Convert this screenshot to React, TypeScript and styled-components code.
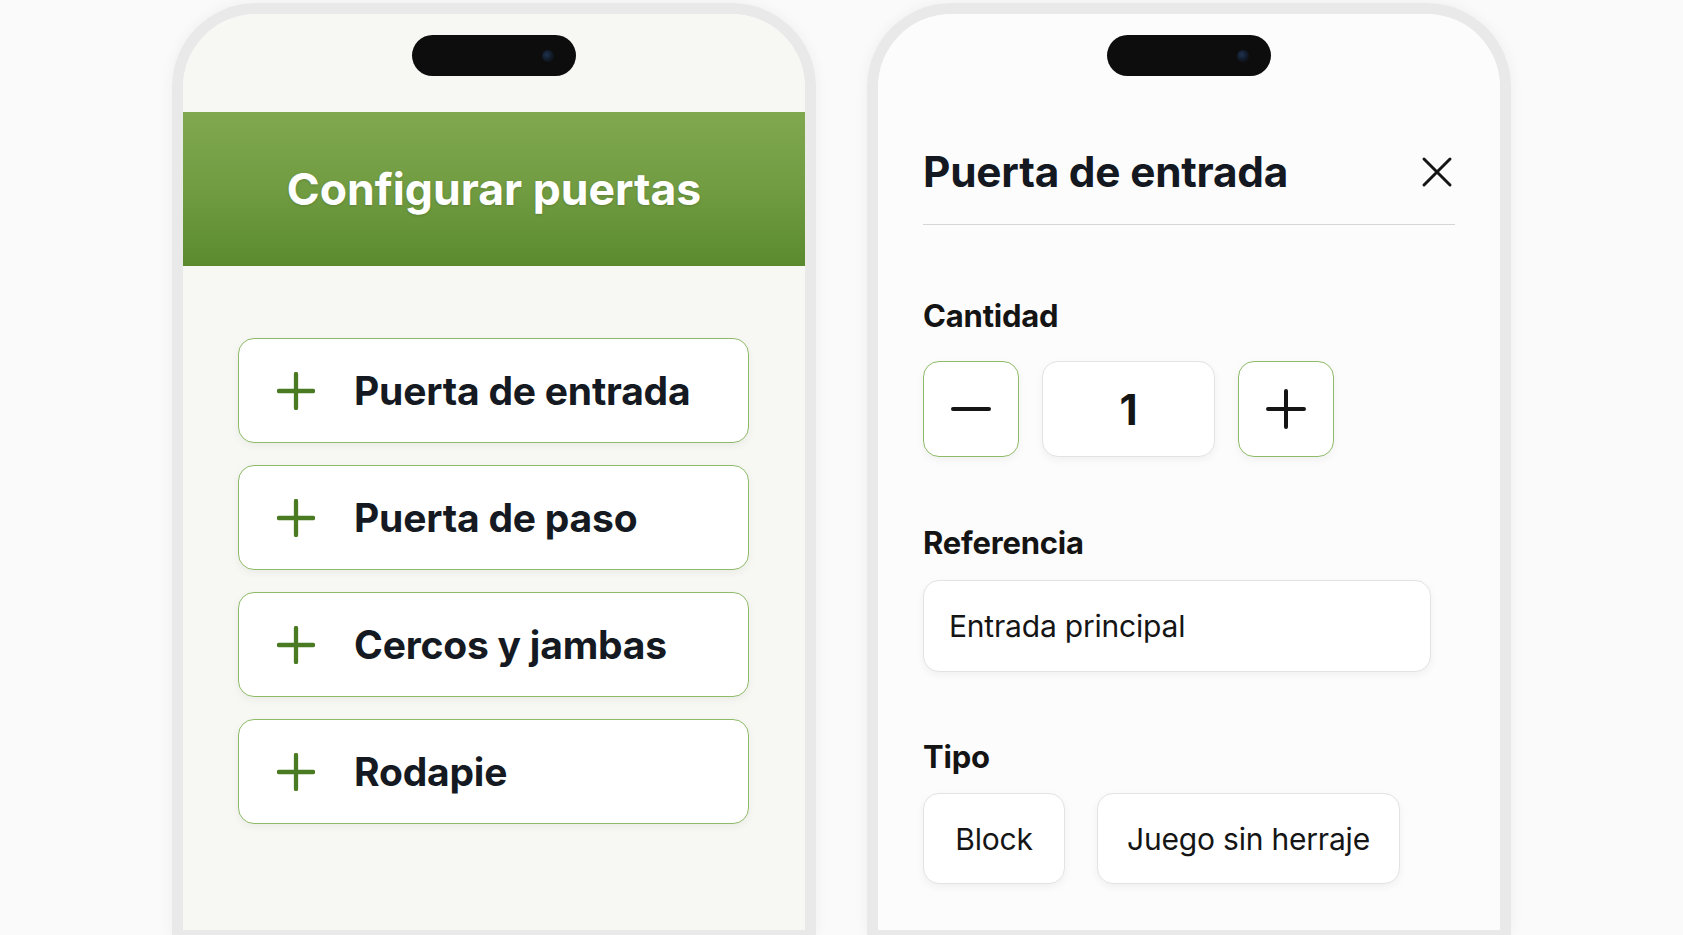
import React from "react";
import styled, { createGlobalStyle } from "styled-components";

const GlobalStyle = createGlobalStyle`
  * { box-sizing: border-box; }
  html, body { margin: 0; padding: 0; background: #fafafa; }
  body { font-family: Inter, "Noto Sans", "Liberation Sans", sans-serif; overflow: hidden; }
`;

const Stage = styled.div`
  display: flex;
  gap: 51px;
  padding: 3px 0 0 172px;
  height: 935px;
  overflow: hidden;
`;

const Phone = styled.div`
  width: 644px;
  height: 932px;
  border: 11px solid #e9e9e9;
  border-bottom-width: 5px;
  border-radius: 84px 84px 0 0;
  box-shadow: 0 0 14px rgba(0, 0, 0, 0.05);
  overflow: hidden;
  flex-shrink: 0;
`;

const Screen = styled.div<{ $bg: string }>`
  height: 100%;
  background: ${(p) => p.$bg};
  border-radius: 73px 73px 0 0;
  display: flex;
  flex-direction: column;
`;

const NotchRow = styled.div`
  display: flex;
  justify-content: center;
  padding-top: 21px;
`;

const Notch = styled.div`
  width: 164px;
  height: 41px;
  border-radius: 21px;
  background: #0d0d0d;
  display: flex;
  align-items: center;
  justify-content: flex-end;
  padding-right: 22px;
`;

const Lens = styled.div`
  width: 12px;
  height: 12px;
  border-radius: 50%;
  background: radial-gradient(circle at 40% 40%, #1f3350 0%, #111a28 50%, #0d0d0d 100%);
`;

const Banner = styled.div`
  margin-top: 36px;
  height: 154px;
  background: linear-gradient(180deg, #80a84f 0%, #719c42 50%, #5b8a2e 100%);
  display: flex;
  align-items: center;
  justify-content: center;
`;

const BannerTitle = styled.h1`
  margin: 0;
  color: #ffffff;
  font-size: 44.5px;
  font-weight: 700;
  letter-spacing: 0;
  text-shadow: 0 1px 3px rgba(0, 0, 0, 0.15);
`;

const OptionList = styled.div`
  display: flex;
  flex-direction: column;
  gap: 22px;
  padding: 72px 56px 0 55px;
`;

const OptionButton = styled.div`
  height: 105px;
  border: 1.5px solid #8fbb69;
  border-radius: 16px;
  background: #ffffff;
  box-shadow: 0 3px 8px rgba(0, 0, 0, 0.05);
  display: flex;
  align-items: center;
  padding-left: 38px;
  gap: 39px;
`;

const OptionLabel = styled.span`
  font-size: 39px;
  font-weight: 700;
  color: #151a22;
  letter-spacing: -0.2px;
`;

const Content = styled.div`
  display: flex;
  flex-direction: column;
  padding: 0 45px;
`;

const SheetHeader = styled.div`
  margin-top: 71px;
  display: flex;
  align-items: center;
  justify-content: space-between;
  padding-bottom: 27px;
  border-bottom: 1.5px solid #d6d6d6;
`;

const SheetTitle = styled.h2`
  margin: 0;
  font-size: 42.3px;
  line-height: 50px;
  font-weight: 700;
  color: #141821;
  letter-spacing: -0.2px;
`;

const CloseButton = styled.div`
  display: flex;
  margin-right: 2px;
`;

const FieldLabel = styled.div<{ $top: number }>`
  margin-top: ${(p) => p.$top}px;
  font-size: 31px;
  line-height: 36px;
  font-weight: 700;
  color: #141414;
  letter-spacing: -0.2px;
`;

const Stepper = styled.div`
  margin-top: 27px;
  display: flex;
  gap: 23px;
`;

const StepButton = styled.div`
  width: 96px;
  height: 96px;
  border: 1.5px solid #8fbb69;
  border-radius: 16px;
  background: #ffffff;
  box-shadow: 0 3px 8px rgba(0, 0, 0, 0.05);
  display: flex;
  align-items: center;
  justify-content: center;
`;

const StepValue = styled.div`
  width: 173px;
  height: 96px;
  border: 1.5px solid #e3e3e3;
  border-radius: 16px;
  background: #ffffff;
  box-shadow: 0 3px 8px rgba(0, 0, 0, 0.05);
  display: flex;
  align-items: center;
  justify-content: center;
  font-size: 42px;
  font-weight: 700;
  color: #151515;
`;

const TextBox = styled.div`
  margin-top: 19px;
  width: 508px;
  height: 92px;
  border: 1.5px solid #e3e3e3;
  border-radius: 16px;
  background: #ffffff;
  box-shadow: 0 3px 8px rgba(0, 0, 0, 0.05);
  display: flex;
  align-items: center;
  padding-left: 25px;
  font-size: 30px;
  font-weight: 400;
  color: #151515;
  letter-spacing: -0.2px;
`;

const ChipRow = styled.div`
  margin-top: 18px;
  display: flex;
  gap: 32px;
`;

const Chip = styled.div<{ $w: number }>`
  width: ${(p) => p.$w}px;
  height: 91px;
  border: 1.5px solid #e3e3e3;
  border-radius: 16px;
  background: #ffffff;
  box-shadow: 0 3px 8px rgba(0, 0, 0, 0.05);
  display: flex;
  align-items: center;
  justify-content: center;
  font-size: 30px;
  font-weight: 400;
  color: #151515;
  letter-spacing: -0.2px;
`;

const PlusIcon = ({ size, color, stroke }: { size: number; color: string; stroke: number }) => (
  <svg width={size} height={size} viewBox="0 0 40 40" fill="none">
    <path d="M20 2 V38 M2 20 H38" stroke={color} strokeWidth={stroke} strokeLinecap="round" />
  </svg>
);

const MinusIcon = () => (
  <svg width="40" height="40" viewBox="0 0 40 40" fill="none">
    <path d="M2 20 H38" stroke="#151515" strokeWidth={4} strokeLinecap="round" />
  </svg>
);

const CloseIcon = () => (
  <svg width="32" height="32" viewBox="0 0 32 32" fill="none">
    <path d="M3 3 L29 29 M29 3 L3 29" stroke="#151515" strokeWidth={3} strokeLinecap="round" />
  </svg>
);

const options = ["Puerta de entrada", "Puerta de paso", "Cercos y jambas", "Rodapie"];

export default function App() {
  return (
    <>
      <GlobalStyle />
      <Stage>
        <Phone>
          <Screen $bg="#f7f7f4">
            <NotchRow>
              <Notch>
                <Lens />
              </Notch>
            </NotchRow>
            <Banner>
              <BannerTitle>Configurar puertas</BannerTitle>
            </Banner>
            <OptionList>
              {options.map((o) => (
                <OptionButton key={o}>
                  <PlusIcon size={38} color="#4a7b23" stroke={4.5} />
                  <OptionLabel>{o}</OptionLabel>
                </OptionButton>
              ))}
            </OptionList>
          </Screen>
        </Phone>
        <Phone>
          <Screen $bg="#fcfcfc">
            <NotchRow>
              <Notch>
                <Lens />
              </Notch>
            </NotchRow>
            <Content>
              <SheetHeader>
                <SheetTitle>Puerta de entrada</SheetTitle>
                <CloseButton>
                  <CloseIcon />
                </CloseButton>
              </SheetHeader>
              <FieldLabel $top={73}>Cantidad</FieldLabel>
              <Stepper>
                <StepButton>
                  <MinusIcon />
                </StepButton>
                <StepValue>1</StepValue>
                <StepButton>
                  <PlusIcon size={40} color="#151515" stroke={4} />
                </StepButton>
              </Stepper>
              <FieldLabel $top={68}>Referencia</FieldLabel>
              <TextBox>Entrada principal</TextBox>
              <FieldLabel $top={67}>Tipo</FieldLabel>
              <ChipRow>
                <Chip $w={142}>Block</Chip>
                <Chip $w={303}>Juego sin herraje</Chip>
              </ChipRow>
            </Content>
          </Screen>
        </Phone>
      </Stage>
    </>
  );
}
